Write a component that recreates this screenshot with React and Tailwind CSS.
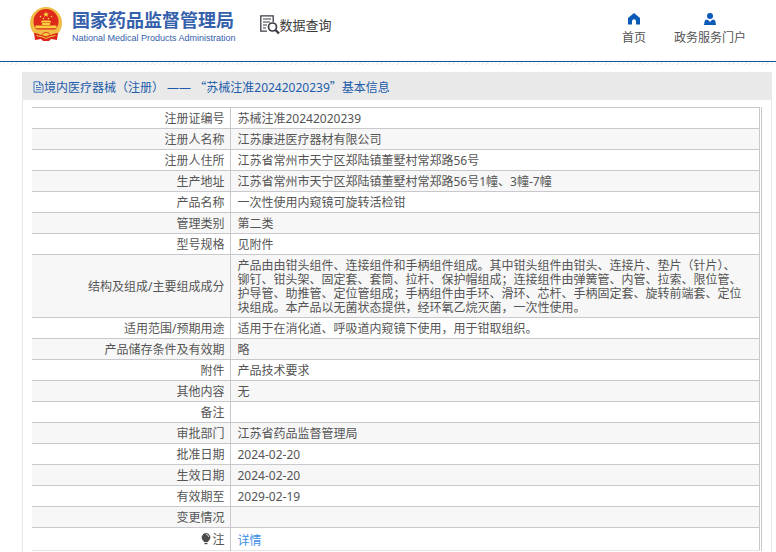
const rows = [
  { label: "注册证编号", value: "苏械注准20242020239" },
  { label: "注册人名称", value: "江苏康进医疗器材有限公司" },
  { label: "注册人住所", value: "江苏省常州市天宁区郑陆镇董墅村常郑路56号" },
  { label: "生产地址", value: "江苏省常州市天宁区郑陆镇董墅村常郑路56号1幢、3幢-7幢" },
  { label: "产品名称", value: "一次性使用内窥镜可旋转活检钳" },
  { label: "管理类别", value: "第二类" },
  { label: "型号规格", value: "见附件" },
  {
    label: "结构及组成/主要组成成分",
    value:
      "产品由由钳头组件、连接组件和手柄组件组成。其中钳头组件由钳头、连接片、垫片（针片）、铆钉、钳头架、固定套、套筒、拉杆、保护帽组成；连接组件由弹簧管、内管、拉索、限位管、护导管、助推管、定位管组成；手柄组件由手环、滑环、芯杆、手柄固定套、旋转前端套、定位块组成。本产品以无菌状态提供，经环氧乙烷灭菌，一次性使用。",
  },
  { label: "适用范围/预期用途", value: "适用于在消化道、呼吸道内窥镜下使用，用于钳取组织。" },
  { label: "产品储存条件及有效期", value: "略" },
  { label: "附件", value: "产品技术要求" },
  { label: "其他内容", value: "无" },
  { label: "备注", value: "" },
  { label: "审批部门", value: "江苏省药品监督管理局" },
  { label: "批准日期", value: "2024-02-20" },
  { label: "生效日期", value: "2024-02-20" },
  { label: "有效期至", value: "2029-02-19" },
  { label: "变更情况", value: "" },
];

function Emblem() {
  return (
    <svg viewBox="0 0 32 34" className="h-[34px] w-8 shrink-0" aria-hidden="true">
      <circle cx="16" cy="16" r="16" fill="#f0bd45" />
      <path d="M4 26l6 1 6 3 6-3 6-1-1 7-6-1-2 2h-6l-2-2-6 1z" fill="#d9251c" />
      <circle cx="16" cy="14.5" r="12.5" fill="#dd2a1b" />
      <path d="M16 4.6l.8 1.8 2 .2-1.5 1.3.5 1.9-1.8-1-1.8 1 .5-1.9-1.5-1.3 2-.2z" fill="#f7d03c" />
      <g fill="#f7d03c">
        <circle cx="10.5" cy="9.6" r="0.8" />
        <circle cx="13.4" cy="11.6" r="0.8" />
        <circle cx="18.6" cy="11.6" r="0.8" />
        <circle cx="21.5" cy="9.6" r="0.8" />
        <path d="M11 14.5l1.5-1h7l1.5 1v1H11zM12 16h8v2h-8zM5.5 18.5h21v2.8h-21z" />
      </g>
      <path d="M5 22.5h22l-3.5 4.5-4.5 1.5h-6L8.5 27z" fill="#f0bd45" />
      <ellipse cx="16" cy="27.5" rx="3.5" ry="2" fill="#f7d03c" stroke="#d9251c" strokeWidth="0.8" />
      <path d="M6.5 28.5l6 1.5 3.5 1.5 3.5-1.5 6-1.5" fill="none" stroke="#f7d03c" strokeWidth="1" />
    </svg>
  );
}

function QueryIcon() {
  return (
    <svg viewBox="0 0 20 20" className="size-5 shrink-0" fill="none" stroke="#3b3b45" aria-hidden="true">
      <path d="M7 16.2H.8V.8h12.4V7" strokeWidth="1.3" />
      <path d="M3 4h8M3 7h7M3 10h4M3 13h3" strokeWidth="1.2" />
      <circle cx="12.5" cy="12" r="4" strokeWidth="1.7" />
      <path d="M15.5 15l3.5 3.5" strokeWidth="2.4" />
    </svg>
  );
}

function HomeIcon() {
  return (
    <svg viewBox="0 0 12 12" className="size-3" fill="#0b5ab8" aria-hidden="true">
      <path d="M6 0l6 5v6.5H8V8.3a2 2 0 0 0-4 0v3.2H0V5z" />
    </svg>
  );
}

function UserIcon() {
  return (
    <svg viewBox="0 0 12 12" className="size-3" fill="#0b5ab8" aria-hidden="true">
      <circle cx="6" cy="3.1" r="3" />
      <path d="M0 12l.6-3.600C.8 7.400 1.600 6.800 2.600 6.800h1.200L6 9l2.200-2.200h1.200c1 0 1.800.6 2 1.600L12 12z" />
    </svg>
  );
}

function DocIcon() {
  return (
    <svg viewBox="0 0 11 12" className="h-3 w-[11px] shrink-0" fill="none" stroke="#2b66b5" aria-hidden="true">
      <path d="M1 .8h5.5L10 4v7.2H1zM6.5.8V4H10" strokeWidth="0.9" />
      <path d="M3 4.5h2M3 6.5h5M3 8.7h5" strokeWidth="0.9" />
    </svg>
  );
}

function BulbIcon() {
  return (
    <svg viewBox="0 0 10 12" className="mr-px inline-block h-3 w-[10px] align-[-1px]" aria-hidden="true">
      <path d="M5 0a4.400 4.400 0 0 1 2.800 7.700L6.800 9H3.200l-1-1.300A4.400 4.400 0 0 1 5 0z" fill="#4a4a4a" />
      <path d="M3.500 9.800h3v1.400h-3z" fill="#4a4a4a" />
      <path d="M5 1.500c1.500 0 2.500 1 2.600 2.400" fill="none" stroke="#fff" strokeWidth="0.8" />
    </svg>
  );
}

function Header() {
  return (
    <header className="flex h-[62px] items-start justify-between border-b border-[#15569c] px-[30px]">
      <div className="flex items-start pt-[7px]">
        <a href="#" className="flex items-start gap-2.5">
          <Emblem />
          <span className="flex flex-col pt-0.5 text-[#3560ab]">
            <span className="text-[18px] leading-[22px] font-bold">国家药品监督管理局</span>
            <span className="font-['Liberation_Sans',sans-serif] text-[9px] leading-[14px] whitespace-nowrap">
              National Medical Products Administration
            </span>
          </span>
        </a>
        <a href="#" className="ml-6 flex items-center pt-2 text-[13px] leading-5 text-[#3a3a3a]">
          <QueryIcon />
          数据查询
        </a>
      </div>
      <nav className="flex gap-7 pt-[13px] text-xs leading-4 text-[#555]">
        <a href="#" className="flex flex-col items-center gap-[5px]">
          <HomeIcon />
          首页
        </a>
        <a href="#" className="flex flex-col items-center gap-[5px]">
          <UserIcon />
          政务服务门户
        </a>
      </nav>
    </header>
  );
}

export default function App() {
  return (
    <div className="flex min-h-screen flex-col bg-white font-['Noto_Sans','Noto_Sans_CJK_SC',sans-serif] text-xs text-[#555]">
      <Header />
      <div className="h-[3px] bg-[repeating-linear-gradient(135deg,#f0f0f2_0_1px,#fff_1px_3px)]" />
      <main className="mt-[7px] mr-1 ml-[22px] flex-1 border-x border-[#e8e8e8]">
        <h1 className="flex h-7 items-center bg-[#e9e9e9] pt-0.5 pl-2.5 text-xs text-[#1c5cab]">
          <DocIcon />
          <span>
            境内医疗器械（注册） —— <span className="font-['Noto_Sans_CJK_SC',sans-serif]">“</span>
            苏械注准20242020239
            <span className="font-['Noto_Sans_CJK_SC',sans-serif]">”</span>基本信息
          </span>
        </h1>
        <div className="mt-[7px] mr-[9px] ml-[9px] border-r border-[#c9c9cd] pr-px">
          <table className="w-full border-collapse border-t border-r border-[#c9c9cd]">
            <tbody>
              {rows.map((row) => (
                <tr key={row.label} className="border-b border-[#c9c9cd] even:bg-[#f7f7f7]">
                  <th scope="row" className="h-[21px] w-[198px] border-r border-[#c9c9cd] pt-1 pr-[5px] pb-0.5 text-right leading-[14px] font-normal">
                    {row.label}
                  </th>
                  <td className="pt-1 pr-3 pb-0.5 pl-[7px] leading-[14px]">{row.value}</td>
                </tr>
              ))}
              <tr className="border-b border-[#e4e4e4]">
                <th scope="row" className="h-[23px] border-r border-[#c9c9cd] pt-0.5 pr-[5px] text-right leading-[14px] font-normal">
                  <BulbIcon />注
                </th>
                <td className="pt-1 pl-[7px] leading-[14px]">
                  <a href="#" className="text-[#3b8ee6]">详情</a>
                </td>
              </tr>
            </tbody>
          </table>
        </div>
      </main>
    </div>
  );
}
